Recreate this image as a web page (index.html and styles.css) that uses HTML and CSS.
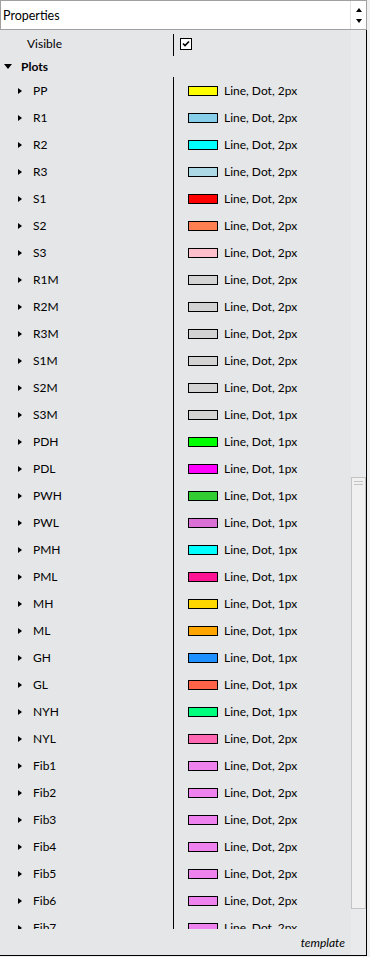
FILE: index.html
```
<!DOCTYPE html>
<html>
<head>
<meta charset="utf-8">
<link rel="stylesheet" href="styles.css">
</head>
<body>
<div class="panel">
  <div class="header">
    <span class="title">Properties</span>
    <div class="spin"><span class="tri-up"></span><span class="tri-down"></span></div>
  </div>
  <div class="body">
    <div class="main">
      <div class="visible-row">
        <div class="vname">Visible</div>
        <div class="vval">
          <svg class="check" width="12" height="12" viewBox="0 0 12 12"><rect x="0.5" y="0.5" width="11" height="11" fill="#fff" stroke="#000"/><path d="M3 5.5 L5 7.5 L9 3.5" fill="none" stroke="#000" stroke-width="1.6"/></svg>
        </div>
      </div>
      <div class="group"><span class="tri-open"></span><span class="gname">Plots</span></div>
      <div class="list">
        <div class="row"><div class="name"><span class="tri-r"></span>PP</div><div class="val"><span class="sw" style="background:#ffff00"></span>Line, Dot, 2px</div></div>
        <div class="row"><div class="name"><span class="tri-r"></span>R1</div><div class="val"><span class="sw" style="background:#87ceeb"></span>Line, Dot, 2px</div></div>
        <div class="row"><div class="name"><span class="tri-r"></span>R2</div><div class="val"><span class="sw" style="background:#00ffff"></span>Line, Dot, 2px</div></div>
        <div class="row"><div class="name"><span class="tri-r"></span>R3</div><div class="val"><span class="sw" style="background:#add8e6"></span>Line, Dot, 2px</div></div>
        <div class="row"><div class="name"><span class="tri-r"></span>S1</div><div class="val"><span class="sw" style="background:#ff0000"></span>Line, Dot, 2px</div></div>
        <div class="row"><div class="name"><span class="tri-r"></span>S2</div><div class="val"><span class="sw" style="background:#ff7f50"></span>Line, Dot, 2px</div></div>
        <div class="row"><div class="name"><span class="tri-r"></span>S3</div><div class="val"><span class="sw" style="background:#ffc0cb"></span>Line, Dot, 2px</div></div>
        <div class="row"><div class="name"><span class="tri-r"></span>R1M</div><div class="val"><span class="sw" style="background:#d3d3d3"></span>Line, Dot, 2px</div></div>
        <div class="row"><div class="name"><span class="tri-r"></span>R2M</div><div class="val"><span class="sw" style="background:#d3d3d3"></span>Line, Dot, 2px</div></div>
        <div class="row"><div class="name"><span class="tri-r"></span>R3M</div><div class="val"><span class="sw" style="background:#d3d3d3"></span>Line, Dot, 2px</div></div>
        <div class="row"><div class="name"><span class="tri-r"></span>S1M</div><div class="val"><span class="sw" style="background:#d3d3d3"></span>Line, Dot, 2px</div></div>
        <div class="row"><div class="name"><span class="tri-r"></span>S2M</div><div class="val"><span class="sw" style="background:#d3d3d3"></span>Line, Dot, 2px</div></div>
        <div class="row"><div class="name"><span class="tri-r"></span>S3M</div><div class="val"><span class="sw" style="background:#d3d3d3"></span>Line, Dot, 1px</div></div>
        <div class="row"><div class="name"><span class="tri-r"></span>PDH</div><div class="val"><span class="sw" style="background:#00ff00"></span>Line, Dot, 1px</div></div>
        <div class="row"><div class="name"><span class="tri-r"></span>PDL</div><div class="val"><span class="sw" style="background:#ff00ff"></span>Line, Dot, 1px</div></div>
        <div class="row"><div class="name"><span class="tri-r"></span>PWH</div><div class="val"><span class="sw" style="background:#32cd32"></span>Line, Dot, 1px</div></div>
        <div class="row"><div class="name"><span class="tri-r"></span>PWL</div><div class="val"><span class="sw" style="background:#da70d6"></span>Line, Dot, 1px</div></div>
        <div class="row"><div class="name"><span class="tri-r"></span>PMH</div><div class="val"><span class="sw" style="background:#00ffff"></span>Line, Dot, 1px</div></div>
        <div class="row"><div class="name"><span class="tri-r"></span>PML</div><div class="val"><span class="sw" style="background:#ff1493"></span>Line, Dot, 1px</div></div>
        <div class="row"><div class="name"><span class="tri-r"></span>MH</div><div class="val"><span class="sw" style="background:#ffd700"></span>Line, Dot, 1px</div></div>
        <div class="row"><div class="name"><span class="tri-r"></span>ML</div><div class="val"><span class="sw" style="background:#ffa500"></span>Line, Dot, 1px</div></div>
        <div class="row"><div class="name"><span class="tri-r"></span>GH</div><div class="val"><span class="sw" style="background:#1e90ff"></span>Line, Dot, 1px</div></div>
        <div class="row"><div class="name"><span class="tri-r"></span>GL</div><div class="val"><span class="sw" style="background:#ff6347"></span>Line, Dot, 1px</div></div>
        <div class="row"><div class="name"><span class="tri-r"></span>NYH</div><div class="val"><span class="sw" style="background:#00ff7f"></span>Line, Dot, 1px</div></div>
        <div class="row"><div class="name"><span class="tri-r"></span>NYL</div><div class="val"><span class="sw" style="background:#ff69b4"></span>Line, Dot, 2px</div></div>
        <div class="row"><div class="name"><span class="tri-r"></span>Fib1</div><div class="val"><span class="sw" style="background:#ee82ee"></span>Line, Dot, 2px</div></div>
        <div class="row"><div class="name"><span class="tri-r"></span>Fib2</div><div class="val"><span class="sw" style="background:#ee82ee"></span>Line, Dot, 2px</div></div>
        <div class="row"><div class="name"><span class="tri-r"></span>Fib3</div><div class="val"><span class="sw" style="background:#ee82ee"></span>Line, Dot, 2px</div></div>
        <div class="row"><div class="name"><span class="tri-r"></span>Fib4</div><div class="val"><span class="sw" style="background:#ee82ee"></span>Line, Dot, 2px</div></div>
        <div class="row"><div class="name"><span class="tri-r"></span>Fib5</div><div class="val"><span class="sw" style="background:#ee82ee"></span>Line, Dot, 2px</div></div>
        <div class="row"><div class="name"><span class="tri-r"></span>Fib6</div><div class="val"><span class="sw" style="background:#ee82ee"></span>Line, Dot, 2px</div></div>
        <div class="row"><div class="name"><span class="tri-r"></span>Fib7</div><div class="val"><span class="sw" style="background:#ee82ee"></span>Line, Dot, 2px</div></div>
      </div>
      <div class="footer">template</div>
    </div>
    <div class="scroll"><div class="thumb"><div class="grip"></div></div></div>
  </div>
</div>
</body>
</html>
```
FILE: styles.css
```
html, body {
  margin: 0;
  padding: 0;
  background: #f0f0f0;
}
body {
  font-family: Lato, "Liberation Sans", sans-serif;
  font-size: 12px;
  color: #000;
}
.panel {
  width: 367px;
}
.header {
  box-sizing: border-box;
  height: 30px;
  background: #fff;
  border: 1px solid #a0a0a0;
  display: flex;
  align-items: center;
}
.title {
  flex: 1;
  padding-left: 2px;
  font-size: 12.5px;
}
.spin {
  width: 15px;
  height: 28px;
  border-left: 1px solid #e3e3e3;
  display: flex;
  flex-direction: column;
  align-items: center;
  justify-content: center;
  gap: 7px;
}
.tri-up {
  width: 0;
  height: 0;
  border-left: 3.5px solid transparent;
  border-right: 3.5px solid transparent;
  border-bottom: 4px solid #000;
}
.tri-down {
  width: 0;
  height: 0;
  border-left: 3.5px solid transparent;
  border-right: 3.5px solid transparent;
  border-top: 4px solid #000;
}
.body {
  box-sizing: border-box;
  height: 926px;
  display: flex;
  background: #e5e6e8;
  border-right: 1px solid #000;
  border-bottom: 1px solid #000;
}
.main {
  width: 351px;
  display: flex;
  flex-direction: column;
}
.visible-row {
  margin-top: 4px;
  height: 22px;
  display: flex;
}
.vname {
  width: 146px;
  padding-left: 27px;
  line-height: 17px;
  padding-top: 1px;
}
.vval {
  border-left: 1px solid #000;
  padding-left: 6px;
  padding-top: 4px;
}
.check {
  display: block;
}
.group {
  height: 21px;
  display: flex;
  align-items: center;
}
.tri-open {
  width: 0;
  height: 0;
  margin-left: 4px;
  margin-right: 9px;
  border-left: 4px solid transparent;
  border-right: 4px solid transparent;
  border-top: 5px solid #000;
}
.gname {
  font-weight: bold;
}
.list {
  height: 852px;
  overflow: hidden;
}
.row {
  height: 27px;
  display: flex;
}
.name {
  width: 173px;
  display: flex;
  align-items: center;
}
.tri-r {
  width: 0;
  height: 0;
  margin-left: 18px;
  margin-right: 11px;
  border-top: 3.5px solid transparent;
  border-bottom: 3.5px solid transparent;
  border-left: 4px solid #000;
}
.val {
  flex: 1;
  border-left: 1px solid #000;
  display: flex;
  align-items: center;
  padding-left: 14px;
}
.sw {
  box-sizing: border-box;
  width: 30px;
  height: 10px;
  border: 1px solid #000;
  margin-right: 6px;
}
.footer {
  flex: 1;
  display: flex;
  align-items: center;
  justify-content: flex-end;
  padding-right: 6px;
  font-style: italic;
}
.scroll {
  width: 15px;
  background: #e9eaeb;
}
.thumb {
  box-sizing: border-box;
  margin-top: 447px;
  width: 15px;
  height: 432px;
  background: #f0f0f0;
  border: 1px solid #c4c4c4;
}
.grip {
  margin: 3px 2px 0;
  height: 2px;
  border-top: 1px solid #c4c4c4;
  border-bottom: 1px solid #c4c4c4;
}
```
